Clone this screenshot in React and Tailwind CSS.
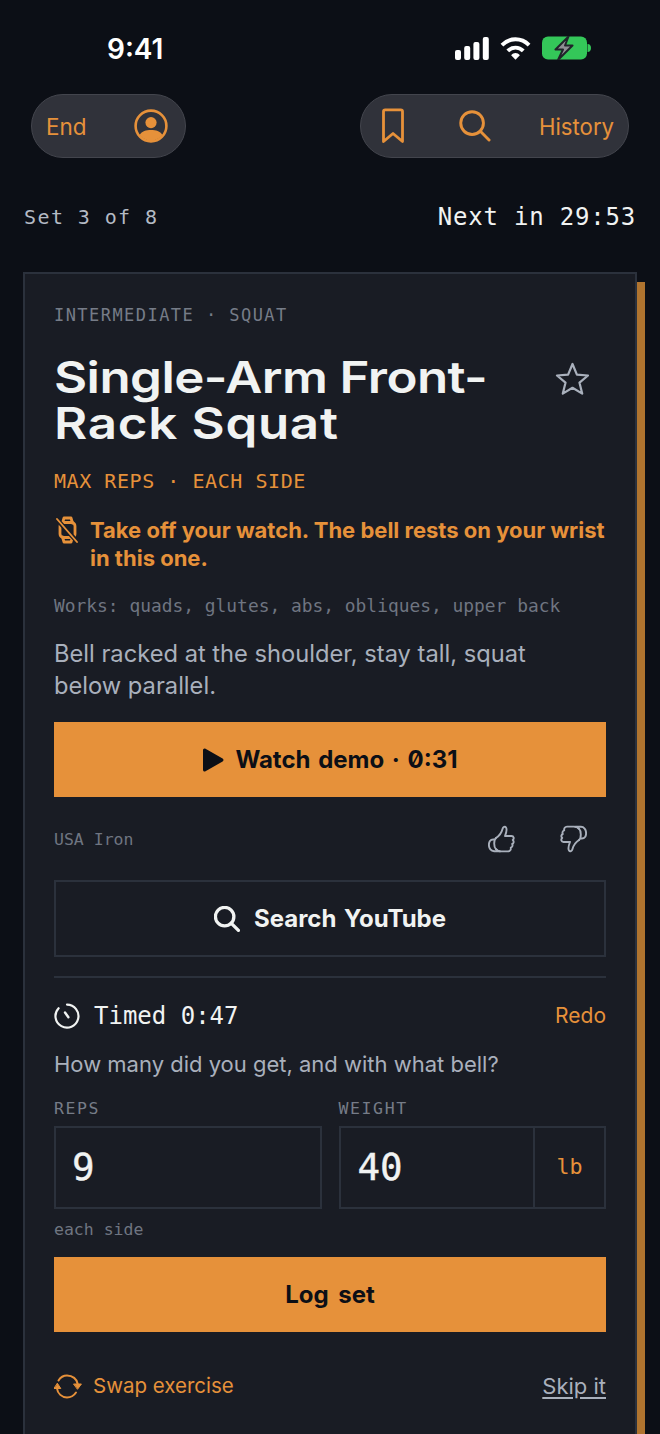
import React from "react";

const mono = "font-['DejaVu_Sans_Mono',monospace]";
const sans = "font-['Inter',sans-serif]";

function Signal() {
  return (
    <svg width="34" height="23" viewBox="0 0 34 23" fill="#fff">
      <rect x="0" y="13" width="6" height="10" rx="2" />
      <rect x="9.2" y="9" width="6" height="14" rx="2" />
      <rect x="18.4" y="5" width="6" height="18" rx="2" />
      <rect x="27.8" y="0" width="6" height="23" rx="2" />
    </svg>
  );
}
function Wifi() {
  return (
    <svg width="31" height="24" viewBox="0 0 32 24" fill="none" stroke="#fff" strokeWidth="4">
      <path d="M2 9 C10 1 22 1 30 9" />
      <path d="M8 15 C12.5 10.5 19.5 10.5 24 15" />
      <path d="M11.5 19.5 L16 24 L20.5 19.5 C18 16.5 14 16.5 11.5 19.5Z" fill="#fff" stroke="none" />
    </svg>
  );
}
function Battery() {
  return (
    <svg width="49" height="24" viewBox="0 0 49 24">
      <rect x="0" y="0.5" width="45" height="23" rx="6" fill="#34c759" />
      <path d="M45.5 8 C48 8 49 10 49 12 C49 14 48 16 45.5 16Z" fill="#34c759" />
      <path d="M26.5 0.5 L13.5 13.5 H21 L16 24 L30.5 9.5 H23Z" fill="#8e8e93" stroke="#20242a" strokeWidth="2" strokeLinejoin="round" />
    </svg>
  );
}
function UserCircle() {
  return (
    <svg width="34" height="34" viewBox="0 0 34 34" fill="none">
      <circle cx="17" cy="17" r="15.4" stroke="#e6913a" strokeWidth="2.6" />
      <circle cx="17" cy="13.6" r="5.6" fill="#e6913a" />
      <path d="M5.5 26 C8 22 12 21 17 21 C22 21 26 22 28.5 26 C25.5 29.6 21.5 31.5 17 31.5 C12.5 31.5 8.5 29.6 5.5 26Z" fill="#e6913a" />
    </svg>
  );
}
function BookmarkI() {
  return (
    <svg width="22" height="36" viewBox="0 0 22 36" fill="none" stroke="#e6913a" strokeWidth="2.8" strokeLinejoin="round" strokeLinecap="round">
      <path d="M1.5 3.5 C1.5 2.5 2.2 1.8 3.2 1.8 H18.8 C19.8 1.8 20.5 2.5 20.5 3.5 V33.5 L11 25.5 L1.5 33.5Z" />
    </svg>
  );
}
function SearchI({ color = "#e6913a", size = 33, w = 3 }) {
  return (
    <svg width={size} height={size} viewBox="0 0 33 33" fill="none" stroke={color} strokeWidth={w} strokeLinecap="round">
      <circle cx="13.5" cy="13.5" r="11.7" />
      <path d="M22 22 L31 31" />
    </svg>
  );
}
function StarI() {
  return (
    <svg width="35" height="33" viewBox="0 0 35 33" fill="none" stroke="#a9b0bc" strokeWidth="2.2" strokeLinejoin="round">
      <path d="M17.5 2 L21.9 12.6 L33 13.5 L24.5 20.7 L27.2 31.6 L17.5 25.8 L7.8 31.6 L10.5 20.7 L2 13.5 L13.1 12.6Z" />
    </svg>
  );
}
function WatchOff() {
  return (
    <svg width="22" height="28" viewBox="0 0 22 28" fill="none" stroke="#e6913a" strokeWidth="2.8" strokeLinecap="round" strokeLinejoin="round">
      <path d="M6.5 7 L8 2 H15 L16.5 7" />
      <path d="M6.5 21 L8 26 H15 L16.5 21" />
      <rect x="4" y="6.5" width="15" height="15" rx="3.5" />
      <path d="M1 3.5 L21 25.5" stroke="#191c24" strokeWidth="4.5" />
      <path d="M1 3 L21 26" strokeWidth="1.9" />
    </svg>
  );
}
function Play() {
  return (
    <svg width="22" height="24" viewBox="0 0 22 24" fill="#0c0f16">
      <path d="M1 2.2 C1 .8 2.3 0 3.5 .7 L20.6 10.5 C21.8 11.2 21.8 12.8 20.6 13.5 L3.5 23.3 C2.3 24 1 23.2 1 21.8Z" />
    </svg>
  );
}
function ThumbUp({ down }) {
  return (
    <svg width="27" height="28" viewBox="0 0 27 28" fill="none" stroke="#a9b0bc" strokeWidth="1.9" strokeLinejoin="round" strokeLinecap="round" style={down ? { transform: "rotate(180deg)" } : undefined}>
      <path d="M8 13 C11 11 13.5 8 14.5 4 C15 1.8 17 1 18 2.5 C19 4 18.6 7 17 11 H23.5 C25.8 11 26.4 13.6 24.8 15 C26.2 16.4 25.8 18.4 24.2 19 C25 20.6 24.2 22.2 22.8 22.6 C23.2 24.6 22 26.4 20 26.4 H13 C10.5 26.4 9 25.4 8 24" />
      <path d="M8 13 C5.6 15 5.6 22 8 24.4 C9 25.6 10.5 26.4 12 26.4" />
      <path d="M6 14.5 C2 14 .9 17 .9 20 C.9 23.4 3 26.4 6.4 26.2 C8 26.2 9.6 26.4 11 26.4" />
    </svg>
  );
}
function Timer() {
  return (
    <svg width="26" height="26" viewBox="0 0 26 26" fill="none" stroke="#f1f3f2" strokeWidth="2.2" strokeLinecap="round">
      <path d="M13 1.6 A11.5 11.5 0 1 1 4.6 5.2" />
      <path d="M11 9.5 L14.4 14.2" strokeWidth="2.4" />
    </svg>
  );
}
function Swap() {
  return (
    <svg width="28" height="25" viewBox="0 0 28 25" fill="none" stroke="#e6913a" strokeWidth="2" strokeLinecap="round">
      <path d="M4.5 6.5 C6.5 3.2 9.5 1.5 13 1.5 C18.5 1.5 23 5 23.7 10" />
      <path d="M3 14.5 C3.5 19.5 8 23.5 13 23.5 C16.5 23.5 20 21.5 22 18.5" />
      <path d="M19.9 10 L27.4 10 L23.7 15Z" fill="#e6913a" strokeLinejoin="round" strokeWidth="1" />
      <path d="M.3 14.5 L6.8 14.5 L3.5 9.5Z" fill="#e6913a" strokeLinejoin="round" strokeWidth="1" />
    </svg>
  );
}

export default function App() {
  return (
    <div className={`h-[1434px] overflow-hidden bg-[#0c0f16] ${sans}`}>
      <div className="flex h-[94px] items-start justify-between pl-[107px] pr-[69px] pt-[34px]">
        <span className="text-[28px] font-semibold leading-[30px] text-white">9:41</span>
        <div className="mt-[2px] flex items-center gap-[11px]">
          <Signal />
          <Wifi />
          <Battery />
        </div>
      </div>

      <div className="flex items-start justify-between pl-[31px] pr-[31px]">
        <div className="flex h-[64px] w-[155px] items-center justify-between rounded-full border border-[#43454d] bg-[#30323a] pl-[14px] pr-[17px] text-[22.5px] text-[#e6913a]">
          <span className="pt-[2px]">End</span>
          <UserCircle />
        </div>
        <div className="flex h-[64px] w-[269px] items-center rounded-full border border-[#43454d] bg-[#30323a] pl-[21px] text-[22.2px] text-[#e6913a]">
          <BookmarkI />
          <div className="ml-[55px]">
            <SearchI size={32} />
          </div>
          <span className="ml-[48px] pt-[2px]">History</span>
        </div>
      </div>

      <div className={`flex h-[114px] items-start justify-between pl-[24px] pr-[24px] pt-[43px] ${mono}`}>
        <span className="text-[20px] leading-[32px] tracking-[1.4px] text-[#b4bac4]">Set 3 of 8</span>
        <span className="text-[24px] leading-[32px] tracking-[0.8px] text-[#f1f3f2]">Next in 29:53</span>
      </div>

      <div className="ml-[23px] mr-[23px] h-[1300px] border-2 border-[#2b313c] bg-[#191c24] px-[29px] pt-[29px] shadow-[8px_10px_0_#b0742f]">
        <div className={`text-[17px] leading-[24px] tracking-[1.45px] text-[#767c88] ${mono}`}>INTERMEDIATE · SQUAT</div>

        <div className="mt-[27px] flex items-start justify-between">
          <h1 className="origin-left scale-x-[1.16] whitespace-nowrap text-[44px] font-semibold leading-[46px] tracking-[-0.5px] text-[#f1f3f2]">
            Single-Arm Front-
            <br />
            <span className="tracking-[0.6px]">Rack Squat</span>
          </h1>
          <div className="mr-[16px] mt-[8px]">
            <StarI />
          </div>
        </div>

        <div className={`mt-[20px] text-[20px] leading-[30px] tracking-[0.55px] text-[#e6913a] ${mono}`}>MAX REPS · EACH SIDE</div>

        <div className="mt-[20px] flex items-start gap-[12px]">
          <div className="ml-[2px] shrink-0">
            <WatchOff />
          </div>
          <p className="text-[22px] font-bold leading-[28px] text-[#e6913a]">
            Take off your watch. The bell rests on your wrist in this one.
          </p>
        </div>

        <div className={`mt-[21px] text-[17.9px] leading-[26px] text-[#6f7581] ${mono}`}>Works: quads, glutes, abs, obliques, upper back</div>

        <p className="mt-[19px] max-w-[500px] text-[23.7px] leading-[32px] text-[#a9b0bc]">Bell racked at the shoulder, stay tall, squat below parallel.</p>

        <button className="mt-[20px] flex h-[75px] w-full items-center justify-center gap-[11px] bg-[#e6913a] text-[24px] font-bold text-[#0c0f16]">
          <Play />
          <span className="[font-feature-settings:'zero'] [word-spacing:2px]">Watch demo · 0:31</span>
        </button>

        <div className="mt-[28px] flex items-center justify-between">
          <span className={`pt-[2px] text-[16.5px] text-[#6f7581] ${mono}`}>USA Iron</span>
          <div className="mr-[19px] flex items-center gap-[45px]">
            <ThumbUp />
            <ThumbUp down />
          </div>
        </div>

        <button className="mt-[27px] flex h-[77px] w-full items-center justify-center gap-[14px] border-2 border-[#2b313c] text-[24px] font-bold text-[#f1f3f2]">
          <SearchI color="#f1f3f2" size={26} w={4.2} />
          <span className="[word-spacing:2px]">Search YouTube</span>
        </button>

        <div className="mt-[19px] border-t-2 border-[#2b313c] pt-[22px]">
          <div className="flex items-center justify-between">
            <div className="flex items-center gap-[14px]">
              <Timer />
              <span className={`text-[24px] leading-[32px] text-[#f1f3f2] ${mono}`}>Timed 0:47</span>
            </div>
            <span className="text-[21px] text-[#e6913a]">Redo</span>
          </div>
          <p className="mt-[16px] text-[22px] leading-[32px] text-[#a9b0bc]">How many did you get, and with what bell?</p>

          <div className="mt-[18px] grid grid-cols-2 gap-[17px]">
            <div>
              <div className={`text-[16.5px] leading-[22px] tracking-[1.6px] text-[#767c88] ${mono}`}>REPS</div>
              <div className="mt-[6px] flex h-[83px] items-center border-2 border-[#2b313c] pl-[16px]">
                <span className={`text-[37.5px] text-[#f1f3f2] [-webkit-text-stroke:0.4px_#f1f3f2] ${mono}`}>9</span>
              </div>
            </div>
            <div>
              <div className={`text-[16.5px] leading-[22px] tracking-[1.6px] text-[#767c88] ${mono}`}>WEIGHT</div>
              <div className="mt-[6px] flex h-[83px] border-2 border-[#2b313c]">
                <div className="flex flex-1 items-center pl-[17px]">
                  <span className={`text-[37.5px] text-[#f1f3f2] [-webkit-text-stroke:0.4px_#f1f3f2] ${mono}`}>40</span>
                </div>
                <div className={`flex w-[71px] items-center justify-center border-l-2 border-[#2b313c] text-[21.6px] text-[#e6913a] ${mono}`}>lb</div>
              </div>
            </div>
          </div>

          <div className={`mt-[9px] text-[16.5px] leading-[24px] text-[#6f7581] ${mono}`}>each side</div>

          <button className="mt-[15px] flex h-[75px] w-full items-center justify-center bg-[#e6913a] text-[24px] font-bold text-[#0c0f16] [word-spacing:4px]">Log set</button>

          <div className="mt-[38px] flex items-center justify-between">
            <div className="flex items-center gap-[11px] text-[20.5px] text-[#e6913a]">
              <Swap />
              <span>Swap exercise</span>
            </div>
            <span className="text-[22px] text-[#a9b0bc] underline underline-offset-3">Skip it</span>
          </div>
        </div>
      </div>
    </div>
  );
}
